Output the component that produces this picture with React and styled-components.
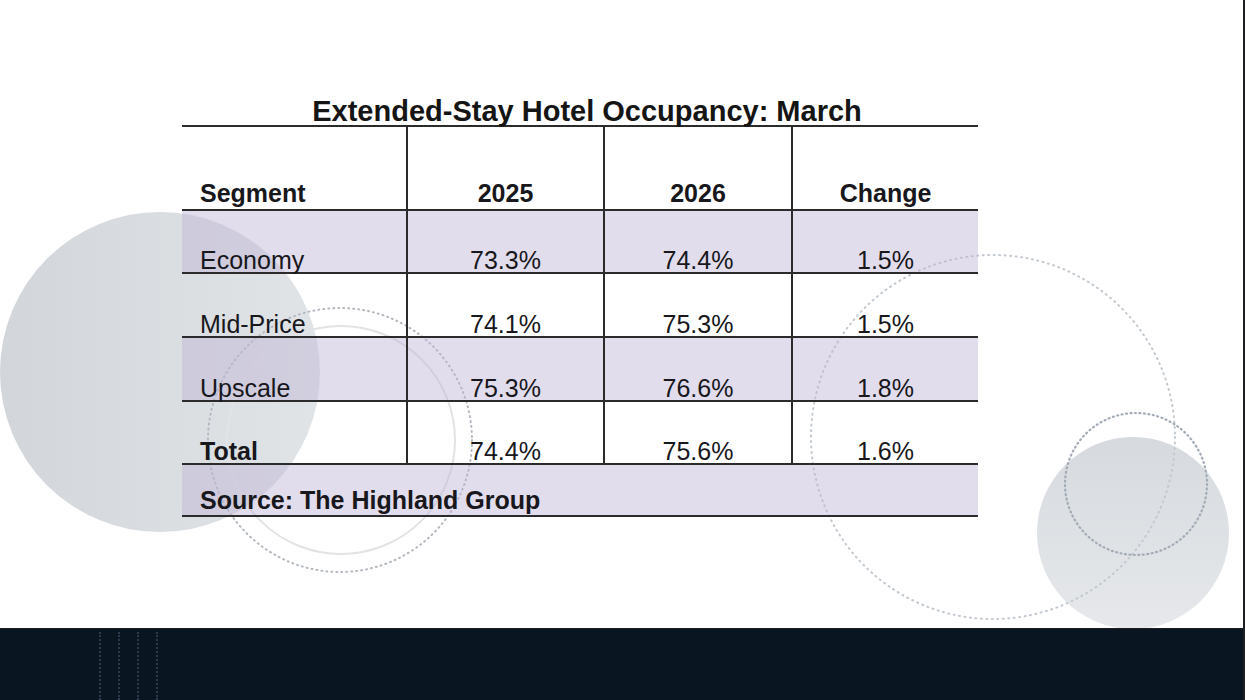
import React from 'react';
import styled, { createGlobalStyle } from 'styled-components';

const GlobalStyle = createGlobalStyle`
  html, body {
    margin: 0;
    padding: 0;
    background: #ffffff;
  }
  * {
    box-sizing: border-box;
  }
`;

const Page = styled.div`
  width: 1245px;
  height: 700px;
  display: flex;
  flex-direction: column;
  overflow: hidden;
  background: #ffffff;
  border-right: 2px solid #1c1f24;
  font-family: 'Liberation Sans', Arial, sans-serif;
`;

const Slide = styled.div`
  position: relative;
  height: 628px;
  flex: none;
  padding: 90px 0 0 182px;
`;

const Backdrop = styled.svg`
  position: absolute;
  left: 0;
  top: 0;
  width: 1245px;
  height: 628px;
  z-index: 0;
`;

const TableBlock = styled.div`
  position: relative;
  z-index: 1;
  width: 796px;
`;

const Title = styled.h1`
  margin: 0;
  height: 37px;
  padding: 6px 0 0 14px;
  border-bottom: 2px solid #2b2b2b;
  font-size: 29px;
  font-weight: 700;
  line-height: 31px;
  text-align: center;
  white-space: nowrap;
  color: #151515;
`;

const Grid = styled.div`
  display: grid;
  grid-template-columns: 224px 197px 188px 187px;
  grid-template-rows: 84px 63px 64px 64px 63px 52px;
`;

const Cell = styled.div`
  display: flex;
  align-items: flex-end;
  justify-content: ${(p) => (p.$first ? 'flex-start' : 'center')};
  padding-left: ${(p) => (p.$first ? '18px' : '0')};
  padding-bottom: ${(p) => (p.$head ? '4px' : '0')};
  border-bottom: 2px solid #2b2b2b;
  border-left: ${(p) => (p.$first ? 'none' : '2px solid #2b2b2b')};
  background: ${(p) => (p.$shade ? 'rgba(190, 180, 212, 0.45)' : 'transparent')};
  font-size: 25px;
  font-weight: ${(p) => (p.$bold ? 700 : 400)};
  line-height: 24px;
  color: #17171c;
`;

const SourceCell = styled(Cell)`
  grid-column: 1 / -1;
  padding-bottom: 3px;
`;

const Footer = styled.div`
  flex: 1;
  background: #0a1522;
  border-top: 1px solid #1a1d22;
  display: flex;
  gap: 17px;
  padding: 3px 0 0 99px;
`;

const DotLine = styled.div`
  width: 0;
  height: 100%;
  border-left: 2px dotted #2c3a4c;
`;

const rows = [
  { name: 'Economy', a: '73.3%', b: '74.4%', c: '1.5%', shade: true },
  { name: 'Mid-Price', a: '74.1%', b: '75.3%', c: '1.5%', shade: false },
  { name: 'Upscale', a: '75.3%', b: '76.6%', c: '1.8%', shade: true },
  { name: 'Total', a: '74.4%', b: '75.6%', c: '1.6%', shade: false, bold: true },
];

export default function App() {
  return (
    <>
      <GlobalStyle />
      <Page>
        <Slide>
          <Backdrop viewBox="0 0 1245 628">
            <defs>
              <linearGradient id="leftDisc" x1="0" y1="0" x2="1" y2="0">
                <stop offset="0" stopColor="#d2d6da" />
                <stop offset="1" stopColor="#e1e4e7" />
              </linearGradient>
              <linearGradient id="rightDisc" x1="0" y1="0" x2="0" y2="1">
                <stop offset="0" stopColor="#d6dade" />
                <stop offset="1" stopColor="#e6e8eb" />
              </linearGradient>
            </defs>
            <circle cx="160" cy="372" r="160" fill="url(#leftDisc)" />
            <circle cx="341" cy="440" r="114" fill="none" stroke="#e2e3e5" strokeWidth="2" />
            <circle
              cx="340"
              cy="440"
              r="132"
              fill="none"
              stroke="#b4b9c0"
              strokeWidth="2"
              strokeDasharray="1 4"
              strokeLinecap="round"
            />
            <circle cx="1133" cy="533" r="96" fill="url(#rightDisc)" />
            <circle
              cx="993"
              cy="437"
              r="182"
              fill="none"
              stroke="#c3c9d0"
              strokeWidth="2"
              strokeDasharray="1 4.5"
              strokeLinecap="round"
            />
            <circle
              cx="1136"
              cy="484"
              r="71"
              fill="none"
              stroke="#a2abb6"
              strokeWidth="2.2"
              strokeDasharray="1 3.5"
              strokeLinecap="round"
            />
          </Backdrop>

          <TableBlock>
            <Title>Extended-Stay Hotel Occupancy: March</Title>
            <Grid>
              <Cell $first $head $bold>Segment</Cell>
              <Cell $head $bold>2025</Cell>
              <Cell $head $bold>2026</Cell>
              <Cell $head $bold>Change</Cell>
              {rows.map((r) => (
                <React.Fragment key={r.name}>
                  <Cell $first $shade={r.shade} $bold={r.bold}>{r.name}</Cell>
                  <Cell $shade={r.shade}>{r.a}</Cell>
                  <Cell $shade={r.shade}>{r.b}</Cell>
                  <Cell $shade={r.shade}>{r.c}</Cell>
                </React.Fragment>
              ))}
              <SourceCell $first $shade $bold>Source: The Highland Group</SourceCell>
            </Grid>
          </TableBlock>
        </Slide>
        <Footer>
          <DotLine />
          <DotLine />
          <DotLine />
          <DotLine />
        </Footer>
      </Page>
    </>
  );
}
